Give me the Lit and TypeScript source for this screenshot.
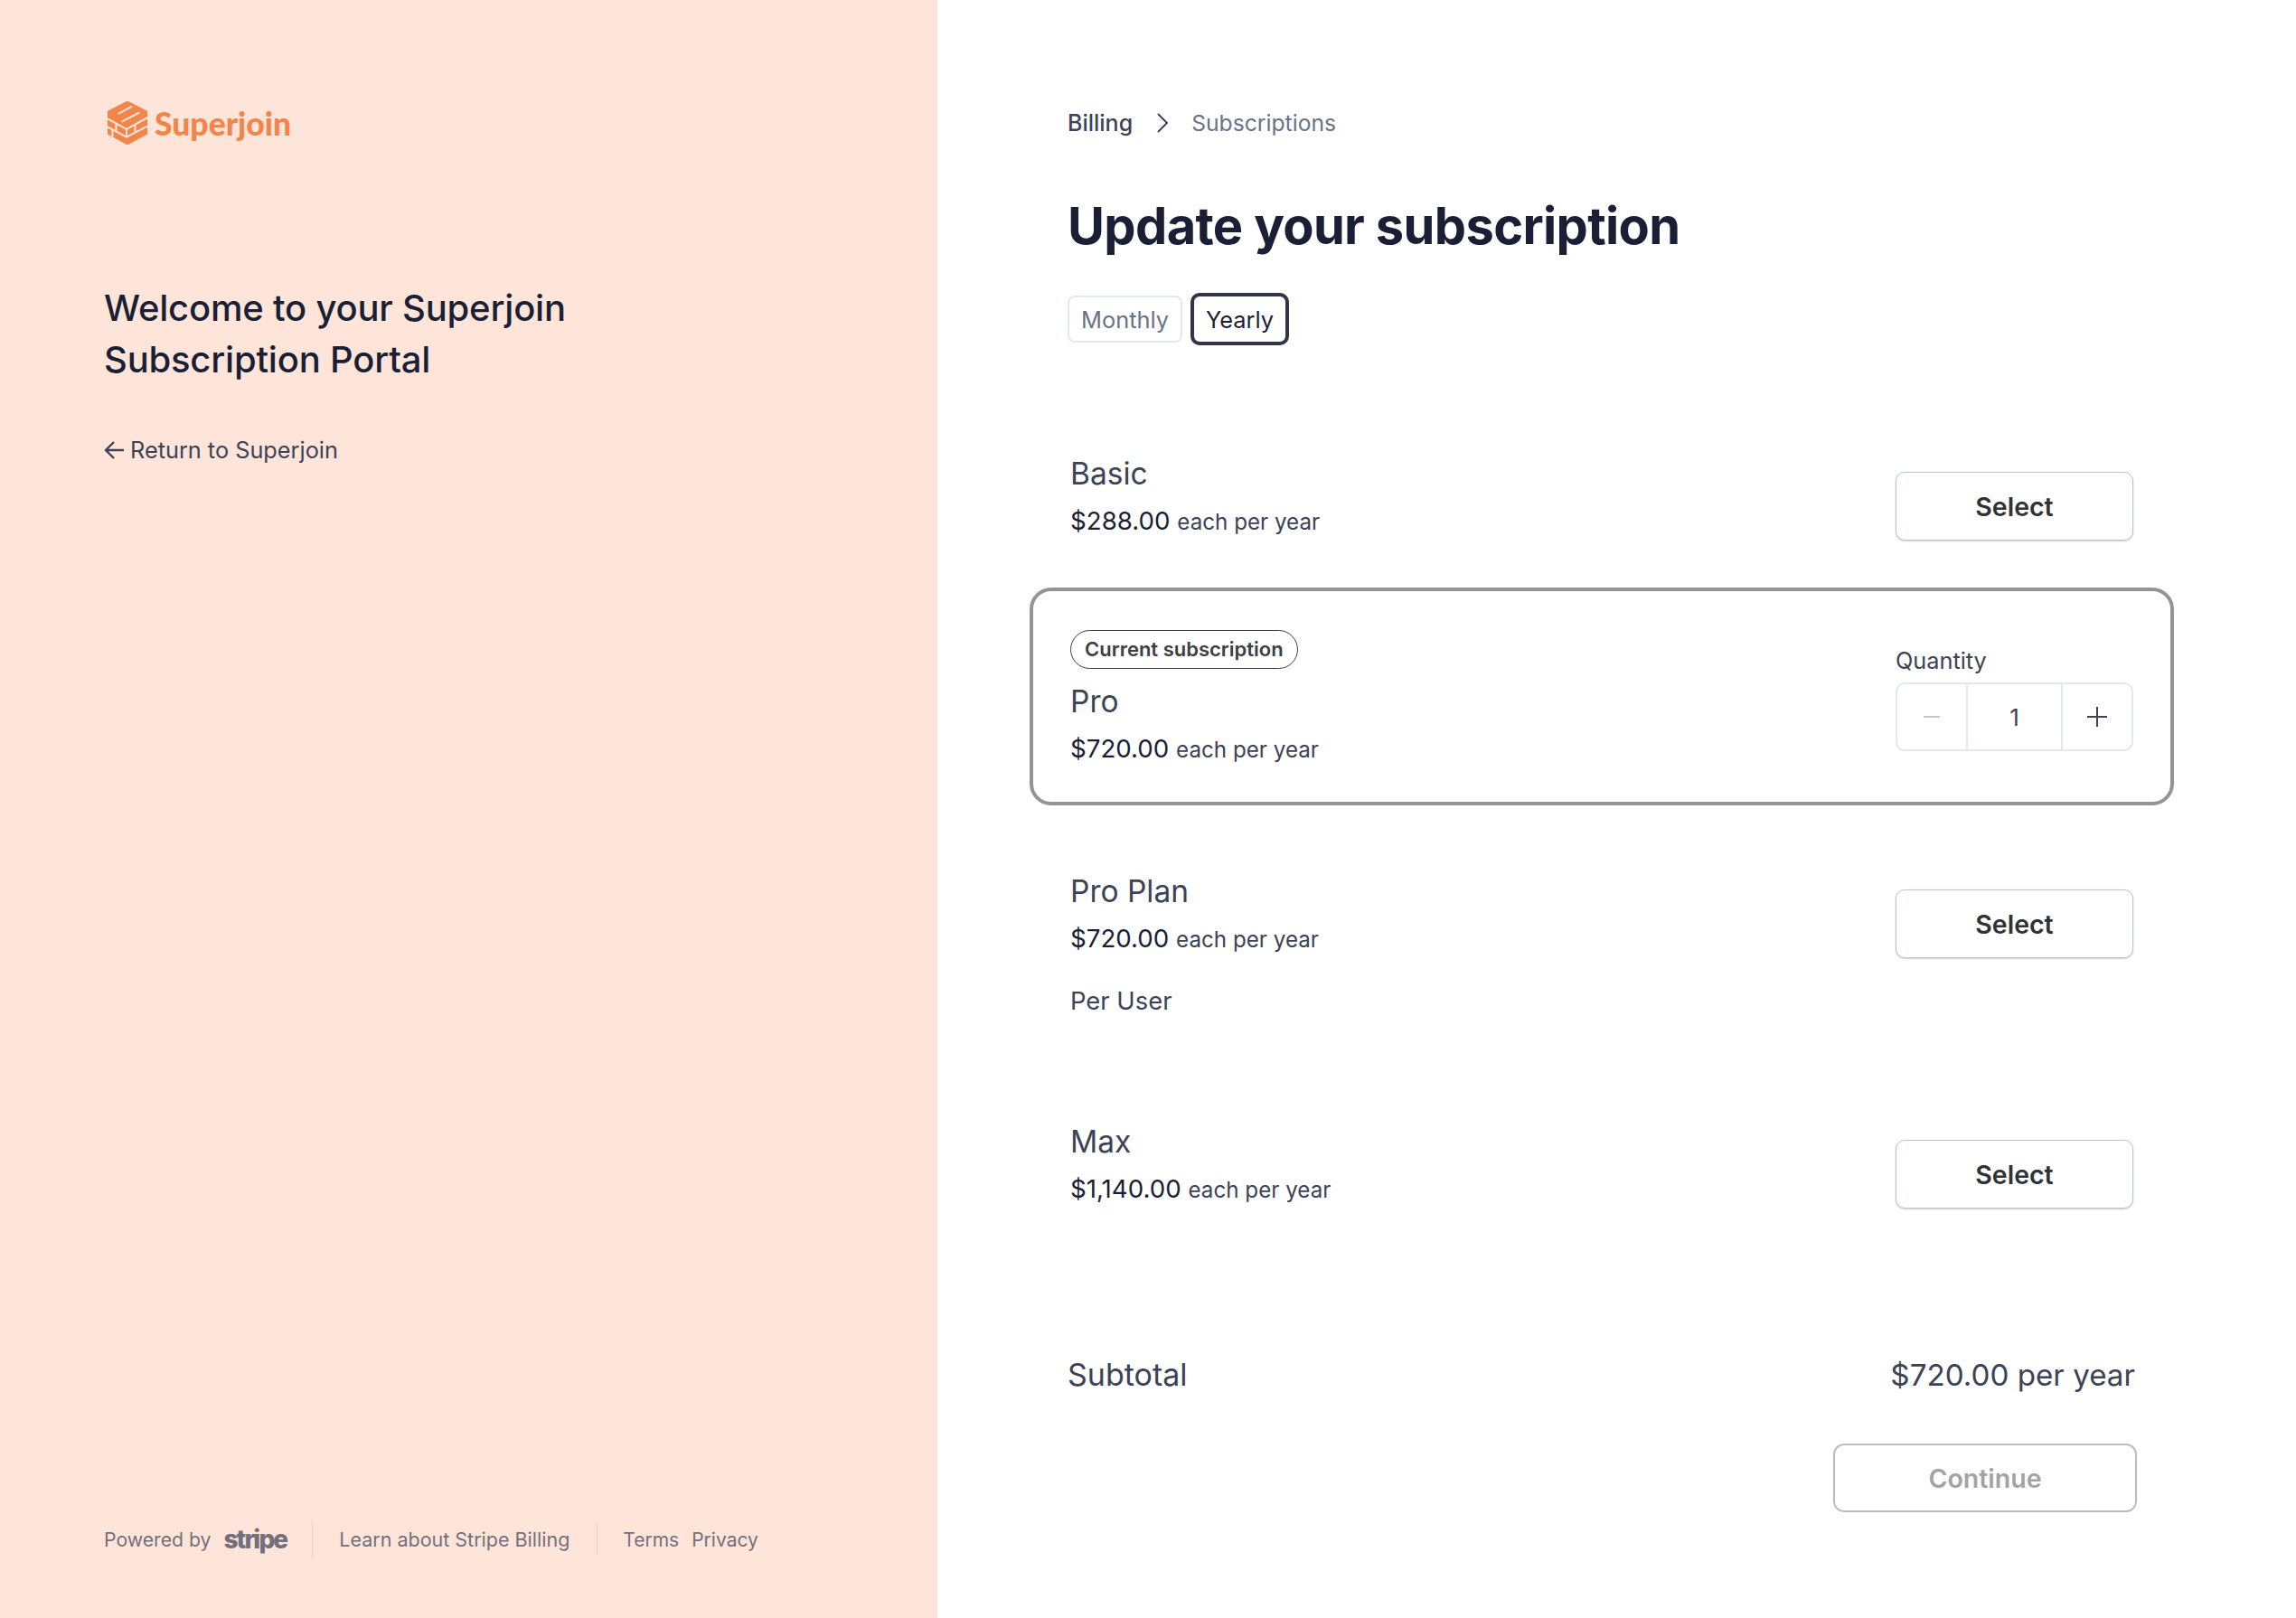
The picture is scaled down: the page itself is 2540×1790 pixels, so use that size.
import { LitElement, html, css } from 'lit';
import { customElement } from 'lit/decorators.js';

interface Plan {
  name: string;
  price: string;
  note?: string;
  current?: boolean;
}

const plans: Plan[] = [
  { name: 'Basic', price: '$288.00' },
  { name: 'Pro', price: '$720.00', current: true },
  { name: 'Pro Plan', price: '$720.00', note: 'Per User' },
  { name: 'Max', price: '$1,140.00' },
];

@customElement('app-root')
export class AppRoot extends LitElement {
  static styles = css`
    :host {
      display: block;
      font-family: Inter, "Liberation Sans", sans-serif;
      color: #1a1f36;
    }

    .page {
      display: flex;
      height: 1790px;
      background: #fff;
    }

    .side {
      width: 1037px;
      box-sizing: border-box;
      background: #ffe5d9;
      padding: 110px 115px 0;
      display: flex;
      flex-direction: column;
    }

    .logo {
      display: flex;
      align-items: center;
      gap: 8px;
      height: 52px;
      margin-left: 4px;
      color: #f2854a;
    }

    .logo svg {
      width: 44px;
      height: 48px;
    }

    .logo span {
      font-family: Lato, sans-serif;
      font-weight: 900;
      font-size: 35.5px;
    }

    .welcome {
      margin: 150px 0 0;
      font-size: 40px;
      line-height: 57px;
      font-weight: 500;
      letter-spacing: -0.2px;
    }

    .back {
      display: flex;
      align-items: center;
      gap: 7px;
      margin-top: 56px;
      font-size: 25.3px;
      line-height: 32px;
      color: #3c4257;
    }

    .foot {
      margin-top: auto;
      margin-bottom: 65px;
      display: flex;
      align-items: center;
      font-size: 21.5px;
      color: #72707c;
      height: 44px;
    }

    .powered {
      font-size: 21.2px;
    }

    .stripe {
      font-weight: 800;
      font-size: 28px;
      letter-spacing: -1.9px;
      margin-left: 14px;
      margin-right: 28px;
    }

    .sep {
      width: 1px;
      height: 43px;
      background: #e8d3c9;
    }

    .sep.short {
      height: 34px;
      margin: 0 28px 0 30px;
    }

    .link {
      margin-left: 29px;
    }

    .legal {
      display: flex;
      gap: 14px;
      font-size: 21px;
    }

    .main {
      flex: 1;
      box-sizing: border-box;
      padding: 118px 178px 0 144px;
    }

    .crumbs {
      display: flex;
      align-items: center;
      font-size: 25px;
      line-height: 36px;
      color: #3c4257;
      gap: 25px;
    }

    .crumbs .first {
      font-weight: 500;
    }

    .crumbs svg {
      margin-left: 1px;
    }

    .crumbs .now {
      font-size: 24.7px;
      color: #697386;
    }

    h1 {
      margin: 61px 0 0;
      font-size: 56px;
      line-height: 70px;
      font-weight: 700;
      letter-spacing: -0.65px;
    }

    .toggle {
      display: flex;
      align-items: center;
      gap: 9px;
      margin-top: 39px;
      height: 58px;
    }

    .toggle div {
      box-sizing: border-box;
      display: flex;
      align-items: center;
      justify-content: center;
      font-size: 25.4px;
    }

    .monthly {
      width: 127px;
      height: 52px;
      border: 2px solid #e3e8ee;
      border-radius: 8px;
      color: #697386;
    }

    .yearly {
      width: 109px;
      height: 58px;
      border: 4px solid #30344f;
      border-radius: 10px;
    }

    .plans {
      margin: 116px -43px 0 -42px;
    }

    .plan {
      display: flex;
      justify-content: space-between;
      box-sizing: border-box;
      border: 4px solid transparent;
      border-radius: 24px;
      padding: 0 41px;
    }

    .plan.current {
      border-color: #949494;
      padding-top: 43px;
      height: 241px;
      margin: 0 0 69px;
    }

    .basic { height: 152px; }
    .pro-plan { height: 277px; }
    .max { height: 232px; }

    .badge {
      display: inline-block;
      box-sizing: border-box;
      height: 43px;
      line-height: 41px;
      padding: 0 15px;
      border: 1px solid #3c3c43;
      border-radius: 22px;
      font-size: 22px;
      font-weight: 600;
      color: #3c4043;
    }

    .name {
      font-size: 33.5px;
      line-height: 44px;
      color: #3c4257;
    }

    .current .name {
      margin-top: 14px;
    }

    .price {
      margin-top: 8px;
      font-size: 27.7px;
      line-height: 44px;
    }

    .price span {
      font-size: 24.2px;
      color: #3c4257;
    }

    .note {
      margin-top: 23px;
      font-size: 27.4px;
      line-height: 44px;
      color: #3c4257;
    }

    .select {
      box-sizing: border-box;
      width: 263px;
      height: 76px;
      display: flex;
      align-items: center;
      justify-content: center;
      background: #fff;
      border: 1px solid #bcc2cf;
      border-radius: 10px;
      box-shadow: 0 1px 2px rgba(60, 66, 87, 0.25);
      font-size: 28.5px;
      font-weight: 600;
      color: #2f3338;
      margin-top: 20px;
    }

    .qty-label {
      font-size: 25.3px;
      line-height: 32px;
      color: #3c4257;
      margin-top: 18px;
    }

    .stepper {
      display: flex;
      box-sizing: border-box;
      width: 263px;
      height: 76px;
      margin-top: 8px;
      border: 2px solid #e3e8ee;
      border-radius: 10px;
    }

    .stepper div {
      display: flex;
      align-items: center;
      justify-content: center;
      font-size: 26px;
      color: #3c4257;
    }

    .stepper .btn {
      width: 76px;
    }

    .stepper .val {
      flex: 1;
      border-left: 2px solid #e3e8ee;
      border-right: 2px solid #e3e8ee;
    }

    .total {
      display: flex;
      justify-content: space-between;
      margin-top: 30px;
      font-size: 34px;
      line-height: 44px;
      color: #3c4257;
    }

    .total .sum {
      font-size: 33.2px;
    }

    .continue {
      box-sizing: border-box;
      width: 336px;
      height: 76px;
      margin: 54px -2px 0 auto;
      display: flex;
      align-items: center;
      justify-content: center;
      border: 2px solid #bdbdbd;
      border-radius: 12px;
      font-size: 28.5px;
      font-weight: 600;
      color: #a3a3a3;
    }
  `;

  private renderPlan(p: Plan) {
    const cls = p.current ? 'current' : p.name.toLowerCase().replace(' ', '-');
    return html`
      <div class="plan ${cls}">
        <div>
          ${p.current ? html`<div class="badge">Current subscription</div>` : ''}
          <div class="name">${p.name}</div>
          <div class="price">${p.price} <span>each per year</span></div>
          ${p.note ? html`<div class="note">${p.note}</div>` : ''}
        </div>
        ${p.current
          ? html`<div>
              <div class="qty-label">Quantity</div>
              <div class="stepper">
                <div class="btn">
                  <svg width="20" height="20" viewBox="0 0 20 20"><path d="M1 10h18" stroke="#c1c9d2" stroke-width="2"/></svg>
                </div>
                <div class="val">1</div>
                <div class="btn">
                  <svg width="22" height="22" viewBox="0 0 22 22"><path d="M0 11h22M11 0v22" stroke="#3c4257" stroke-width="2"/></svg>
                </div>
              </div>
            </div>`
          : html`<div class="select">Select</div>`}
      </div>
    `;
  }

  render() {
    return html`
      <div class="page">
        <div class="side">
          <div class="logo">
            <svg viewBox="0 0 130 140">
              <path d="M65 0L130 33V105L65 140L0 105V33Z" fill="#f2854a" stroke="#f2854a" stroke-width="4" stroke-linejoin="round"/>
              <g fill="none" stroke="#ffe5d9" stroke-width="6">
                <path d="M35 40L80 16M46 66L104 36"/>
                <path d="M-2 55L62 90L132 52M-2 82L62 116L132 80"/>
                <path d="M90 74V98M28 70V96M16 90V116M62 90V116"/>
              </g>
            </svg>
            <span>Superjoin</span>
          </div>
          <h2 class="welcome">Welcome to your Superjoin<br />Subscription Portal</h2>
          <div class="back">
            <svg width="22" height="20" viewBox="0 0 22 20" fill="none" stroke="#3c4257" stroke-width="2.4"><path d="M22 10H2M11 1L2 10l9 9"/></svg>
            Return to Superjoin
          </div>
          <div class="foot">
            <span class="powered">Powered by</span><span class="stripe">stripe</span>
            <div class="sep"></div>
            <span class="link">Learn about Stripe Billing</span>
            <div class="sep short"></div>
            <div class="legal"><span>Terms</span><span>Privacy</span></div>
          </div>
        </div>
        <div class="main">
          <div class="crumbs">
            <span class="first">Billing</span>
            <svg width="14" height="22" viewBox="0 0 14 22" fill="none" stroke="#3c4257" stroke-width="2"><path d="M2 1l10 10L2 21"/></svg>
            <span class="now">Subscriptions</span>
          </div>
          <h1>Update your subscription</h1>
          <div class="toggle">
            <div class="monthly">Monthly</div>
            <div class="yearly">Yearly</div>
          </div>
          <div class="plans">${plans.map((p) => this.renderPlan(p))}</div>
          <div class="total"><span>Subtotal</span><span class="sum">$720.00 per year</span></div>
          <div class="continue">Continue</div>
        </div>
      </div>
    `;
  }
}
